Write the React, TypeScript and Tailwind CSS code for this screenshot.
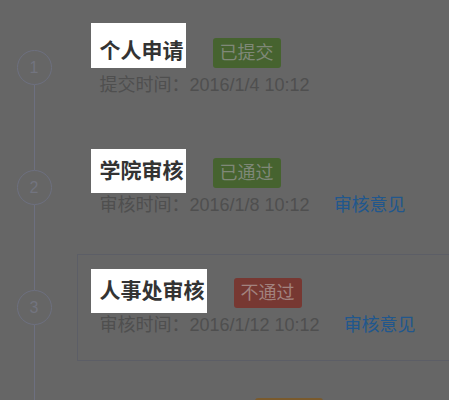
import React from 'react';

type Step = {
  no: number;
  title: string;
  status: string;
  tone: 'green' | 'red' | 'brown';
  timeLabel: string;
  time: string;
  opinion?: boolean;
  active?: boolean;
  highlight?: boolean;
  first?: boolean;
};

const steps: Step[] = [
  { no: 1, title: '个人申请', status: '已提交', tone: 'green', timeLabel: '提交时间：', time: '2016/1/4 10:12', highlight: true, first: true },
  { no: 2, title: '学院审核', status: '已通过', tone: 'green', timeLabel: '审核时间：', time: '2016/1/8 10:12', opinion: true, highlight: true },
  { no: 3, title: '人事处审核', status: '不通过', tone: 'red', timeLabel: '审核时间：', time: '2016/1/12 10:12', opinion: true, highlight: true, active: true },
  { no: 4, title: '学校领导审批', status: '待审核', tone: 'brown', timeLabel: '审核时间：', time: '--' },
];

const toneClass = {
  green: 'bg-[#46632f] text-[#7f8878]',
  red: 'bg-[#773832] text-[#a2827e]',
  brown: 'bg-[#7a5a2c] text-[#a89a80]',
};

const StepRow: React.FC<{ step: Step }> = ({ step }) => {
  return (
    <div className="flex h-[120px]">
      <div className="w-[68px] shrink-0 flex flex-col items-center">
        <div className={`h-[50px] w-px ${step.first ? 'bg-transparent' : 'bg-[#6d7080]'}`}></div>
        <div className="w-[35px] h-[35px] shrink-0 rounded-full border-[1.5px] border-[#6d7080] flex items-center justify-center text-[16px] text-[#72747f]">
          {step.no}
        </div>
        <div className="flex-1 w-px bg-[#6d7080]"></div>
      </div>
      <div
        className={`ml-[9px] mt-[14px] h-[107px] w-[420px] shrink-0 border-[1.5px] border-r-0 pl-[12.5px] pt-[13.5px] ${step.active ? 'border-[#5c5e66]' : 'border-transparent'}`}
      >
        <div className="flex items-start h-[44px]">
          <span
            className={`pl-[9px] pr-[2px] text-[21px] font-bold leading-[30px] whitespace-nowrap ${step.highlight ? 'bg-white text-[#333]' : 'text-[#2e2e2e]'} ${step.first ? '-mt-[6px] pt-[13px] pb-[2px]' : 'py-[7px]'}`}
          >
            {step.title}
          </span>
          <span className={`ml-[27px] mt-[9px] h-[30px] px-[7px] rounded-[3px] text-[18px] leading-[30px] whitespace-nowrap ${toneClass[step.tone]}`}>
            {step.status}
          </span>
        </div>
        <div className="ml-[9px] flex text-[18px] leading-[24px] text-[#4f4f4f] whitespace-nowrap">
          <span>{step.timeLabel}{step.time}</span>
          {step.opinion && <span className="ml-[24px] text-[#21578d]">审核意见</span>}
        </div>
      </div>
    </div>
  );
};

export default function App() {
  return (
    <div
      className="w-full h-screen overflow-hidden bg-[#666666]"
      style={{ fontFamily: '"Liberation Sans", "Noto Sans CJK SC", sans-serif' }}
    >
      {steps.map((s) => (
        <StepRow key={s.no} step={s} />
      ))}
    </div>
  );
}
